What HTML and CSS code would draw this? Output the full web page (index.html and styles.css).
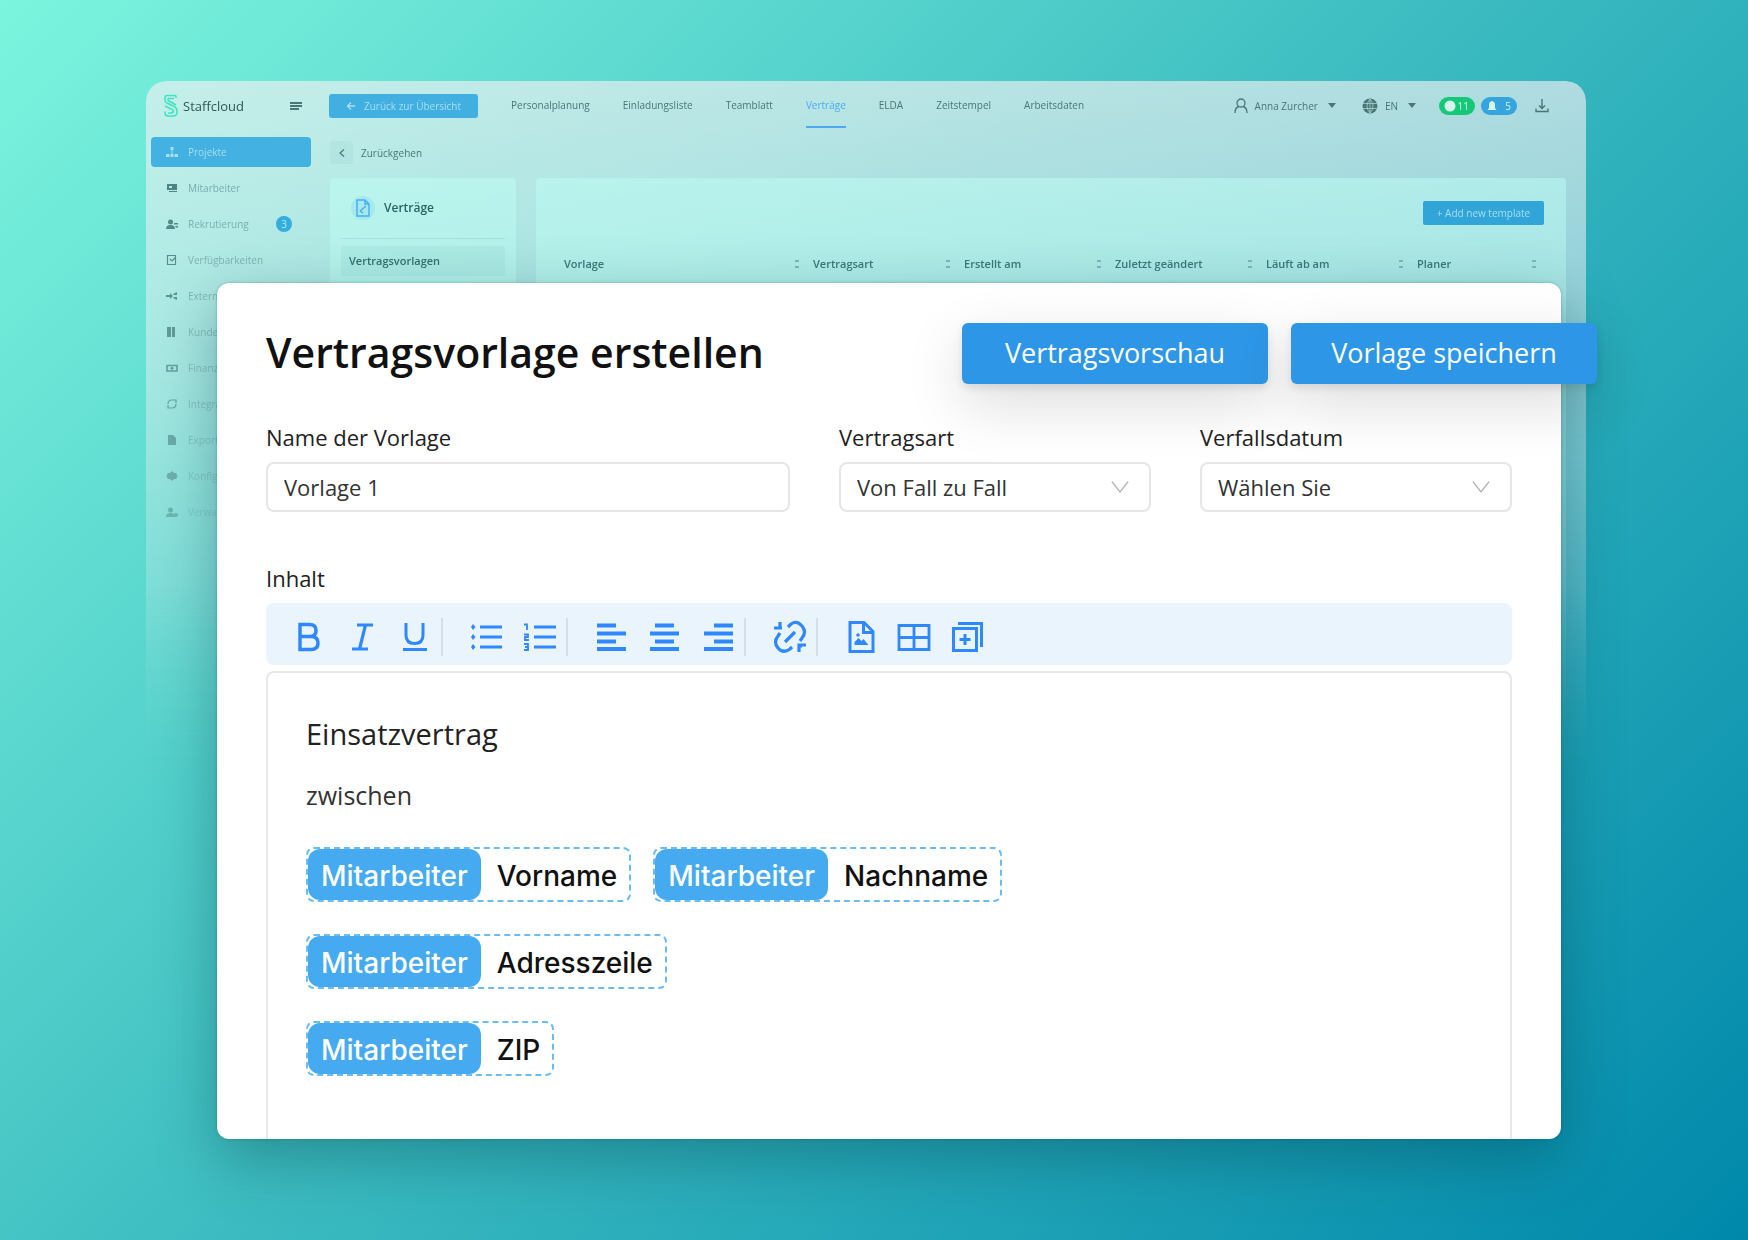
FILE: index.html
```html
<!DOCTYPE html>
<html lang="de">
<head>
<meta charset="utf-8">
<meta name="viewport" content="width=device-width, initial-scale=1">
<title>Staffcloud – Vertragsvorlage erstellen</title>
<link rel="stylesheet" href="styles.css">
</head>
<body>
<div class="stage">
  <div class="app">
    <header class="topbar">
      <div class="brand">
        <svg class="brand-mark" viewBox="0 0 16 24" width="16" height="24"><path d="M13 4V2.500Q13 1.500 12 1.500H4Q2 1.500 2 4V6Q2 8 4 9L12 13Q14 14 14 17V18Q14 22 10 22H5Q2 22 2 19V17.500M5 4.500H11M5 4.500Q4.500 6 6 7L13 11M2 12L10 16Q11 18 9 19H5" fill="none" stroke="currentColor" stroke-width="1.600"/></svg>
        <span class="brand-name">Staffcloud</span>
        <svg class="brand-menu" viewBox="0 0 12 10" width="12" height="10"><path d="M0 2H12M0 5H12M0 8H9" stroke="currentColor" stroke-width="1.800"/></svg>
      </div>
      <button class="small-btn back-btn" type="button">
        <svg viewBox="0 0 10 10" width="10" height="10"><path d="M9 5H1.500M5 1.500L1.500 5L5 8.500" fill="none" stroke="currentColor" stroke-width="1.400"/></svg>
        Zurück zur Übersicht
      </button>
      <nav class="tabs">
        <a href="#">Personalplanung</a>
        <a href="#">Einladungsliste</a>
        <a href="#">Teamblatt</a>
        <a href="#" class="active">Verträge</a>
        <a href="#">ELDA</a>
        <a href="#">Zeitstempel</a>
        <a href="#">Arbeitsdaten</a>
      </nav>
      <div class="account">
        <a href="#" class="account-item">
          <svg viewBox="0 0 14 16" width="14" height="16"><circle cx="7" cy="5" r="4" fill="none" stroke="currentColor" stroke-width="1.300"/><path d="M1 15Q1 9.500 5 8.500M9 8.500Q13 9.500 13 15" fill="none" stroke="currentColor" stroke-width="1.300"/></svg>
          <span>Anna Zurcher</span>
          <svg class="caret" viewBox="0 0 8 5" width="8" height="5"><path d="M0 0H8L4 5Z" fill="currentColor"/></svg>
        </a>
        <a href="#" class="account-item">
          <svg viewBox="0 0 16 16" width="16" height="16"><circle cx="8" cy="8" r="7.500" fill="currentColor"/><path d="M1 5.500H15M1 10.500H15M8 1V15M8 1Q2 8 8 15Q14 8 8 1" fill="none" stroke="#b3dcdf" stroke-width=".7"/></svg>
          <span>EN</span>
          <svg class="caret" viewBox="0 0 8 5" width="8" height="5"><path d="M0 0H8L4 5Z" fill="currentColor"/></svg>
        </a>
        <span class="pills">
          <span class="pill green"><svg viewBox="0 0 12 12" width="12" height="12"><circle cx="6" cy="6" r="5.500" fill="currentColor"/></svg>11</span>
          <span class="pill blue"><svg viewBox="0 0 12 12" width="12" height="12"><path d="M6 1Q9 1.500 9 5V8L10.500 10H1.500L3 8V5Q3 1.500 6 1Z" fill="currentColor"/></svg>5</span>
        </span>
        <svg viewBox="0 0 14 14" width="14" height="14"><path d="M7 0V9M4 6.500L7 9.500L10 6.500M1 9.500V12.500H13V9.500" fill="none" stroke="currentColor" stroke-width="1.400"/></svg>
      </div>
    </header>
    <div class="app-body">
      <nav class="sidebar">
        <a href="#" class="active"><svg viewBox="0 0 12 12" width="12" height="12"><path d="M4.500 1H7.500V4H4.500ZM0 8H3.500V11H0ZM4.500 8H7.500V11H4.500ZM8.500 8H12V11H8.500ZM5.500 4H6.500V8H5.500Z" fill="currentColor"/></svg>Projekte</a>
        <a href="#"><svg viewBox="0 0 12 12" width="12" height="12"><path d="M1 2H11V8H1Z M3 9H11V10H3Z" fill="currentColor"/><path d="M3 4H6V6H3Z" fill="#b5e8e4"/></svg>Mitarbeiter</a>
        <a href="#"><svg viewBox="0 0 12 12" width="12" height="12"><circle cx="4.500" cy="4" r="2.500" fill="currentColor"/><path d="M0 11Q0 7 4.500 7T9 11ZM8 5H12V6.500H8ZM9 8H12V9.500H10Z" fill="currentColor"/></svg>Rekrutierung<span class="count">3</span></a>
        <a href="#"><svg viewBox="0 0 12 12" width="12" height="12"><path d="M1.500 1.500H9.500V10.500H1.500ZM4 5L6 7L9.500 3.500" fill="none" stroke="currentColor" stroke-width="1.200"/></svg>Verfügbarkeiten</a>
        <a href="#"><svg viewBox="0 0 12 12" width="12" height="12"><path d="M0 5H4V3L7 6L4 9V7H0ZM7 4L11 2V5H8ZM7 8L11 10V7H8Z" fill="currentColor"/></svg>Externe</a>
        <a href="#"><svg viewBox="0 0 12 12" width="12" height="12"><path d="M1 1H5V11H1ZM6 1H9V11H6Z" fill="currentColor"/></svg>Kunden</a>
        <a href="#"><svg viewBox="0 0 12 12" width="12" height="12"><path d="M1 3.500H11V9H1Z" fill="none" stroke="currentColor" stroke-width="1.600"/><circle cx="6" cy="6.200" r="1.500" fill="currentColor"/></svg>Finanzen</a>
        <a href="#"><svg viewBox="0 0 12 12" width="12" height="12"><path d="M2 6Q2 2 6 2H10V5M10 6Q10 10 6 10H2V7" fill="none" stroke="currentColor" stroke-width="1.200"/></svg>Integration</a>
        <a href="#"><svg viewBox="0 0 12 12" width="12" height="12"><path d="M2 1H7L10 4V11H2Z" fill="currentColor"/></svg>Export</a>
        <a href="#"><svg viewBox="0 0 12 12" width="12" height="12"><path d="M6 1L8 3H10.500V5L12 6L10.500 7.500V9H8L6 11L4 9H1.500V7.500L0 6L1.500 5V3H4Z" fill="currentColor"/></svg>Konfiguration</a>
        <a href="#"><svg viewBox="0 0 12 12" width="12" height="12"><circle cx="4.500" cy="4" r="2.500" fill="currentColor"/><path d="M0 11Q0 7 4.500 7T9 11Z" fill="currentColor"/><circle cx="10" cy="9" r="2" fill="currentColor"/></svg>Verwaltung</a>
      </nav>
      <main class="content">
        <a href="#" class="crumb"><span class="crumb-icon"><svg viewBox="0 0 6 8" width="6" height="8"><path d="M5 .5L1 4L5 7.500" fill="none" stroke="currentColor" stroke-width="1.200"/></svg></span>Zurückgehen</a>
        <div class="panels">
          <section class="panel side-panel">
            <h2><span class="doc-badge"><svg viewBox="0 0 14 18" width="14" height="18"><path d="M1 1H9L13 5V17H1ZM9 1V5H13M4 12L10 7M4 12L7 14" fill="none" stroke="currentColor" stroke-width="1.500"/></svg></span>Verträge</h2>
            <a href="#">Vertragsvorlagen</a>
          </section>
          <section class="panel main-panel">
            <button class="small-btn add-btn" type="button">+ Add new template</button>
            <table class="templates">
              <thead><tr><th class="wide"><span>Vorlage<i></i></span></th><th><span>Vertragsart<i></i></span></th><th><span>Erstellt am<i></i></span></th><th><span>Zuletzt geändert<i></i></span></th><th><span>Läuft ab am<i></i></span></th><th><span>Planer<i></i></span></th></tr></thead>
            </table>
          </section>
        </div>
      </main>
    </div>
  </div>

  <form class="dialog">
    <header class="dialog-head">
      <h1>Vertragsvorlage erstellen</h1>
      <div class="actions">
        <button type="button">Vertragsvorschau</button>
        <button type="button">Vorlage speichern</button>
      </div>
    </header>
    <div class="fields">
      <div class="field">
        <label for="name">Name der Vorlage</label>
        <input id="name" type="text" value="Vorlage 1">
      </div>
      <div class="field">
        <label for="type">Vertragsart</label>
        <div class="select"><select id="type"><option>Von Fall zu Fall</option></select><svg viewBox="0 0 20 14" width="18" height="14"><path d="M1 1L10 12.500L19 1" fill="none" stroke="currentColor" stroke-width="1.600"/></svg></div>
      </div>
      <div class="field">
        <label for="expiry">Verfallsdatum</label>
        <div class="select"><select id="expiry"><option>Wählen Sie</option></select><svg viewBox="0 0 20 14" width="18" height="14"><path d="M1 1L10 12.500L19 1" fill="none" stroke="currentColor" stroke-width="1.600"/></svg></div>
      </div>
    </div>
    <div class="editor-label" id="content-label">Inhalt</div>
    <div class="toolbar" role="toolbar" aria-label="Formatierung">
      <div class="tools">
        <button type="button" aria-label="Fett"><svg viewBox="0 0 32 32"><path d="M7 3.500H16.500Q23 3.500 23 9.500T16.500 15.500H7ZM7 15.500H18Q25 15.500 25 22T18 28.500H7Z" stroke-width="3.500"/></svg></button>
        <button type="button" aria-label="Kursiv"><svg viewBox="0 0 32 32"><path d="M11 4H27M6 28H22M19.500 4L13.500 28" stroke-width="3.200"/></svg></button>
        <button type="button" aria-label="Unterstrichen"><svg viewBox="0 0 32 32"><path d="M7 2V14Q7 22.500 15.500 22.500T24 14V2M4 28.500H28" stroke-width="3"/></svg></button>
      </div>
      <div class="tools">
        <button type="button" aria-label="Aufzählung"><svg viewBox="0 0 32 32"><path d="M9 6H31M9 16H31M9 26H31" stroke-width="3"/><path d="M2 3L4.500 6L2 9L0 6ZM2 13L4.500 16L2 19L0 16ZM2 23L4.500 26L2 29L0 26Z" fill="currentColor" stroke="none"/></svg></button>
        <button type="button" aria-label="Nummerierung"><svg viewBox="0 0 32 32"><path d="M10 6H32M10 16H32M10 26H32" stroke-width="3"/><path d="M0 3.500H3V9M0 13.500H4V16H1V19H5M0 23H4V29H0M1 26H4" stroke-width="1.800"/></svg></button>
      </div>
      <div class="tools">
        <button type="button" aria-label="Linksbündig"><svg viewBox="0 0 32 32"><path d="M1 4.500H20M1 12.500H30M1 20.500H20M1 28H30" stroke-width="3.800"/></svg></button>
        <button type="button" aria-label="Zentriert"><svg viewBox="0 0 32 32"><path d="M6 4.500H25M1 12.500H30M6 20.500H25M1 28H30" stroke-width="3.800"/></svg></button>
        <button type="button" aria-label="Rechtsbündig"><svg viewBox="0 0 32 32"><path d="M12 4.500H31M2 12.500H31M12 20.500H31M2 28H31" stroke-width="3.800"/></svg></button>
      </div>
      <div class="tools">
        <button type="button" aria-label="Link entfernen"><svg viewBox="0 0 32 32"><path d="M11 21L21 11M14 6L17 3Q23 -1 28 5T28 17L26 20M6 12L4 15Q-1 21 4 27T16 28L18 26M6 1V8M0 7H8M25 31V24H32M24 25L28 25" stroke-width="3.200"/></svg></button>
      </div>
      <div class="tools">
        <button type="button" aria-label="Bild einfügen"><svg viewBox="0 0 32 32"><path d="M4 1.500H18L27 10.500V30.500H4ZM17.500 1.500V11.500H27" stroke-width="3"/><path d="M8.500 24V21L12.500 17L15.500 20L17.500 18L22.500 24Z" fill="currentColor" stroke="none"/><circle cx="12" cy="14" r="1.800" fill="currentColor" stroke="none"/></svg></button>
        <button type="button" aria-label="Tabelle einfügen"><svg viewBox="0 0 32 32"><path d="M0 4.500H30V28.500H0ZM15 4.500V28.500M0 16.500H30" stroke-width="2.800"/></svg></button>
        <button type="button" aria-label="Element hinzufügen"><svg viewBox="0 0 32 32"><path d="M1.500 7.500H24.500V29.500H1.500ZM6 2.500H29.500V26M13 13V24M7.500 18.500H18.500" stroke-width="3"/></svg></button>
      </div>
    </div>
    <div class="editor" aria-labelledby="content-label">
      <h2>Einsatzvertrag</h2>
      <p>zwischen</p>
      <div class="chip-row">
        <span class="chip"><b>Mitarbeiter</b><span>Vorname</span></span>
        <span class="chip"><b>Mitarbeiter</b><span>Nachname</span></span>
      </div>
      <div class="chip-row">
        <span class="chip"><b>Mitarbeiter</b><span>Adresszeile</span></span>
      </div>
      <div class="chip-row">
        <span class="chip"><b>Mitarbeiter</b><span>ZIP</span></span>
      </div>
    </div>
  </form>
</div>
</body>
</html>
```
FILE: styles.css
```css
* { box-sizing: border-box; }

body {
  margin: 0;
  min-height: 100vh;
  font-family: "Open Sans", "Noto Sans", sans-serif;
  color: #222;
  background: linear-gradient(135deg, #7cf5de 0%, #3dbdc1 48%, #0088ab 100%);
}

a { color: inherit; text-decoration: none; }
button, input, select { font: inherit; color: inherit; }
h1, h2, p { margin: 0; }

.stage {
  display: grid;
  padding: 81px 162px 101px 146px;
}

.app, .dialog { grid-area: 1 / 1; }

/* Application window, fading out towards the bottom */
.app {
  display: flex;
  flex-direction: column;
  height: 720px;
  border-radius: 20px 20px 0 0;
  font-size: 10px;
  line-height: 16px;
  color: #4a7776;
  background: linear-gradient(rgba(240, 240, 242, .66), rgba(232, 240, 242, .5) 40%, rgba(225, 240, 242, 0));
  box-shadow: 0 20px 50px rgba(0, 60, 70, .06);
  -webkit-mask-image: linear-gradient(#000 70%, transparent);
  mask-image: linear-gradient(#000 70%, transparent);
}

.topbar {
  display: flex;
  align-items: center;
  height: 49px;
  padding: 0 37px 0 17px;
}

.brand { display: flex; align-items: center; width: 166px; }
.brand-mark { color: #3fe3c4; }
.brand-name { margin-left: 4px; font-size: 13px; color: #2f5655; }
.brand-menu { margin: 0 27px 0 auto; }

.small-btn {
  display: flex;
  align-items: center;
  justify-content: center;
  gap: 8px;
  height: 24px;
  padding: 0;
  border: 0;
  border-radius: 3px;
  background: #41afe0;
  color: #a9def0;
  font-size: 10px;
}

.back-btn { width: 149px; }

.tabs { display: flex; gap: 33px; margin-left: 33px; }
.tabs a { height: 49px; padding-top: 16px; }
.tabs .active { border-bottom: 2px solid #4fa9ee; height: 47px; color: #4fa9ee; }

.account { display: flex; align-items: center; gap: 18px; margin-left: auto; }
.account-item { display: flex; align-items: center; gap: 7px; }
.account-item + .account-item { margin-left: -6px; padding-left: 14px; }
.account-item .caret { margin-left: 3px; }
.account-item + .pills { margin-left: 5px; }
.pills { display: flex; gap: 6px; }
.pill {
  display: flex;
  align-items: center;
  justify-content: space-between;
  width: 36px;
  height: 18px;
  padding: 0 6px 0 5px;
  border-radius: 9px;
  color: #d4f6ee;
}
.green { background: #15c877; }
.blue { background: #36a4de; }

.app-body { display: flex; flex: 1; }

.sidebar {
  display: flex;
  flex-direction: column;
  gap: 6px;
  width: 171px;
  padding: 7px 6px 0 5px;
  -webkit-mask-image: linear-gradient(#000 10%, transparent);
  mask-image: linear-gradient(#000 10%, transparent);
}
.sidebar a {
  display: flex;
  align-items: center;
  gap: 10px;
  height: 30px;
  padding: 0 19px 0 15px;
  border-radius: 4px;
  color: #76aeac;
}
.sidebar svg { color: #4c8483; }
.sidebar .active, .sidebar .active svg { color: #a9def0; }
.sidebar .active { background: #43b1e1; }
.count {
  width: 16px;
  height: 16px;
  margin-left: auto;
  border-radius: 8px;
  background: #2fa9de;
  color: #b6e9f3;
  text-align: center;
}

.content { display: flex; flex-direction: column; flex: 1; padding: 11px 20px 0 13px; }
.crumb { display: flex; align-items: center; gap: 8px; height: 23px; }
.crumb-icon {
  display: flex;
  align-items: center;
  justify-content: center;
  width: 23px;
  height: 23px;
  border-radius: 4px;
  background: rgba(90, 150, 150, .08);
}

.panels { display: flex; flex: 1; gap: 20px; margin-top: 14px; }
.panel {
  border-radius: 4px 4px 0 0;
  background: linear-gradient(rgba(190, 255, 244, .5), rgba(190, 255, 244, .4) 20%, rgba(190, 255, 244, 0));
}
.side-panel { width: 186px; padding: 0 11px; }
.side-panel h2 {
  display: flex;
  align-items: center;
  gap: 9px;
  height: 61px;
  padding-left: 10px;
  border-bottom: 1px solid rgba(80, 150, 150, .15);
  font-size: 12px;
  font-weight: 600;
  color: #2b6262;
}
.doc-badge {
  display: flex;
  align-items: center;
  justify-content: center;
  width: 24px;
  height: 24px;
  border-radius: 12px;
  background: rgba(90, 190, 240, .2);
  color: #4aaef0;
}
.side-panel a {
  display: block;
  margin-top: 7px;
  padding: 7px 8px;
  border-radius: 3px;
  background: rgba(70, 150, 150, .08);
  font-size: 11px;
  font-weight: 600;
  color: #327070;
}

.main-panel { flex: 1; padding-top: 23px; }
.add-btn { width: 121px; margin: 0 22px 0 auto; border-radius: 2px; background: #31a5d8; }

.templates { width: 100%; margin-top: 31px; border-collapse: collapse; table-layout: fixed; }
.templates th { width: 151px; padding: 0; font-size: 11px; font-weight: 600; text-align: left; color: #387878; }
.templates th span { display: flex; align-items: center; justify-content: space-between; padding-left: 14px; }
.templates .wide { width: 263px; }
.templates .wide span { padding-left: 28px; }
.templates th:last-child { width: auto; }
.templates th:last-child span { padding-right: 30px; }
.templates i { width: 4px; height: 8px; border: solid #7db8b8; border-width: 2px 0; }

/* Template dialog */
.dialog {
  z-index: 1;
  margin: 202px 25px 0 71px;
  padding: 40px 49px 0;
  border-radius: 12px;
  background: #fff;
  box-shadow: 0 20px 60px rgba(0, 60, 70, .36), 0 0 3px rgba(0, 60, 60, .3);
}

.dialog-head { display: flex; align-items: flex-start; justify-content: space-between; margin-right: -85px; }
.dialog-head h1 { font-size: 41px; line-height: 58px; font-weight: 600; color: #111; }
.actions { display: flex; gap: 23px; }
.actions button {
  width: 306px;
  height: 61px;
  padding: 0 0 3px;
  border: 0;
  border-radius: 6px;
  background: #2e96e6;
  color: #fff;
  font-size: 27px;
  box-shadow: 0 4px 8px rgba(0, 0, 0, .1), 0 20px 60px rgba(0, 0, 0, .14);
}

.fields { display: grid; grid-template-columns: 524fr 312fr 312fr; gap: 49px; margin-top: 38px; }
.field { display: flex; flex-direction: column; gap: 9px; min-width: 0; }
.field label, .editor-label { font-size: 22px; line-height: 31px; }
.field input, .select select {
  width: 100%;
  height: 50px;
  padding: 0 16px 1px;
  border: 2px solid #e6e6e6;
  border-radius: 8px;
  background: #fff;
  font-size: 22px;
  color: #333;
}
.select { display: grid; align-items: center; }
.select select { grid-area: 1 / 1; appearance: none; }
.select svg { grid-area: 1 / 1; justify-self: end; margin-right: 22px; color: #b4b4b4; pointer-events: none; }

.editor-label { margin-top: 51px; }

.toolbar {
  display: flex;
  align-items: center;
  height: 62px;
  margin-top: 9px;
  padding: 6px 0 0 27px;
  border-radius: 8px;
  background: #eaf4fc;
}
.tools { display: flex; align-items: center; gap: 21px; height: 38px; }
.tools:not(:last-child) { margin-right: 28px; padding-right: 10px; border-right: 2px solid #d3dee8; }
.tools button { width: 32px; height: 32px; padding: 0; border: 0; background: none; color: #3088ff; }
.tools svg { display: block; width: 32px; height: 32px; fill: none; stroke: currentColor; overflow: visible; }

.editor {
  min-height: 468px;
  margin-top: 6px;
  padding: 42px 38px 30px;
  border: 2px solid #e8e8e8;
  border-bottom: 0;
  border-radius: 8px 8px 0 0;
}
.editor h2 { font-size: 29px; line-height: 38px; font-weight: 400; }
.editor p { margin: 26px 0 36px; font-size: 25px; line-height: 32px; color: #333; }
.chip-row { display: flex; gap: 22px; margin-bottom: 32px; }
.chip {
  display: flex;
  align-items: center;
  height: 55px;
  padding-right: 12px;
  border: 2px dashed #6bbcf2;
  border-radius: 8px;
  font: 500 28px/48px Inter, "Liberation Sans", sans-serif;
  color: #111;
}
.chip b { padding: 3px 13px 0; margin-right: 16px; border-radius: 12px; background: #45aaef; color: #fff; font-weight: 500; }
.chip span { padding-top: 3px; }
```
